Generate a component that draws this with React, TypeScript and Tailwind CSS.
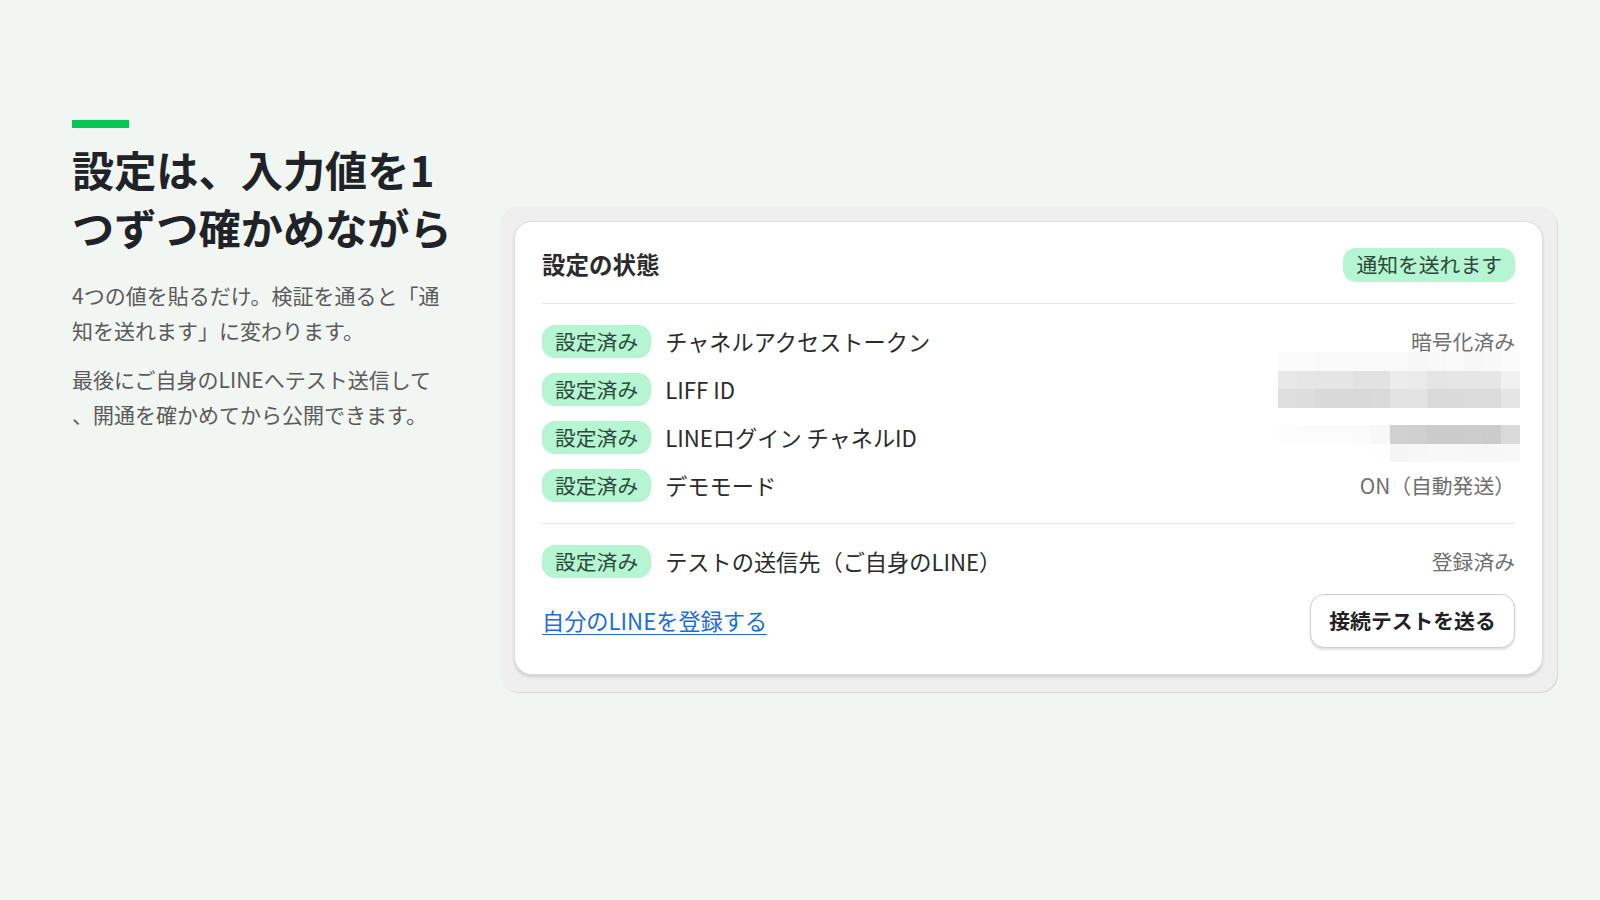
import React from "react";

const mosaicLiff: string[][] = [
  ["bg-[#fbfbfb]", "bg-[#fbfbfb]", "bg-[#fafafa]", "bg-[#fafafa]", "bg-[#fafafa]", "bg-[#fafafa]", "bg-[#fafafa]", "bg-[#f7f7f7]", "bg-[#f8f8f8]", "bg-[#fafafa]", "bg-[#f7f7f7]", "bg-[#f8f8f8]", "bg-[#fbfbfb]"],
  ["bg-[#e8e8e8]", "bg-[#e6e6e6]", "bg-[#e5e5e5]", "bg-[#e5e5e5]", "bg-[#e2e2e2]", "bg-[#e2e2e2]", "bg-[#ececec]", "bg-[#eaeaea]", "bg-[#e5e5e5]", "bg-[#e6e6e6]", "bg-[#e6e6e6]", "bg-[#e6e6e6]", "bg-[#f0f0f0]"],
  ["bg-[#dedede]", "bg-[#dddddd]", "bg-[#d9d9d9]", "bg-[#d9d9d9]", "bg-[#d9d9d9]", "bg-[#dadada]", "bg-[#e3e3e3]", "bg-[#e3e3e3]", "bg-[#dadada]", "bg-[#dadada]", "bg-[#dbdbdb]", "bg-[#dbdbdb]", "bg-[#e5e5e5]"],
];

const mosaicLogin: string[][] = [
  ["bg-[#fdfdfd]", "bg-[#fcfcfc]", "bg-[#fcfcfc]", "bg-[#fcfcfc]", "bg-[#fbfbfb]", "bg-[#f8f8f8]", "bg-[#d1d1d1]", "bg-[#cfcfcf]", "bg-[#cbcbcb]", "bg-[#cbcbcb]", "bg-[#cdcdcd]", "bg-[#cbcbcb]", "bg-[#dadada]"],
  ["bg-white", "bg-white", "bg-white", "bg-white", "bg-white", "bg-[#fefefe]", "bg-[#f5f5f5]", "bg-[#f7f7f7]", "bg-[#f8f8f8]", "bg-[#f8f8f8]", "bg-[#f7f7f7]", "bg-[#f7f7f7]", "bg-[#f8f8f8]"],
];

function Mosaic({ rows, top }: { rows: string[][]; top: string }) {
  return (
    <div className={`absolute right-[-5px] ${top} flex flex-col`}>
      {rows.map((r, i) => (
        <div key={i} className="flex">
          {r.map((c, j) => (
            <div key={j} className={`h-[18.5px] w-[18.6px] ${c}`} />
          ))}
        </div>
      ))}
    </div>
  );
}

function Badge({ children }: { children: React.ReactNode }) {
  return (
    <span className="flex h-[33px] shrink-0 items-center justify-center rounded-[13px] bg-[#b5f5d1] px-[13px] text-[20.8px] text-[#2c4a3a]">
      {children}
    </span>
  );
}

function Row({ label, right }: { label: string; right: React.ReactNode }) {
  return (
    <div className="flex h-[33px] items-center justify-between">
      <div className="flex items-center gap-[14px]">
        <Badge>設定済み</Badge>
        <span className="text-[22.2px] text-[#2b2b2b]">{label}</span>
      </div>
      {right}
    </div>
  );
}

export default function App() {
  return (
    <div className="flex min-h-screen w-full bg-[#f1f6f3] pl-[72px] font-['Noto_Sans_CJK_JP',sans-serif]">
      <div className="w-[390px] shrink-0 pt-[120px]">
        <div className="h-[8px] w-[57px] bg-[#06c755]" />
        <h1 className="mt-[12px] whitespace-nowrap text-[42.2px] font-bold leading-[58px] text-[#1f2328]">
          設定は、入力値を1
          <br />
          つずつ確かめながら
        </h1>
        <p className="mt-[22px] whitespace-nowrap text-[21px] leading-[34.5px] text-[#5a5a5a]">
          4つの値を貼るだけ。検証を通ると「通
          <br />
          知を送れます」に変わります。
        </p>
        <p className="mt-[15px] whitespace-nowrap text-[21px] leading-[34.5px] text-[#5a5a5a]">
          最後にご自身のLINEへテスト送信して
          <br />
          、開通を確かめてから公開できます。
        </p>
      </div>

      <div className="ml-[38px] mt-[207px] h-fit w-[1057px] shrink-0 rounded-[18px] bg-[#efefef] pb-[17px] pl-[14px] pr-[14px] pt-[14px] shadow-[1px_1px_0_#d9d9d9]">
        <div className="rounded-[18px] border border-[#dedede] bg-white px-[27px] pb-[26px] pt-[26px] shadow-[0_2px_3px_rgba(0,0,0,0.14)]">
          <div className="flex h-[34px] items-center justify-between">
            <span className="text-[23.5px] font-bold text-[#2b2b2b]">設定の状態</span>
            <span className="flex h-[34px] items-center rounded-[13px] bg-[#b5f5d1] px-[13px] text-[20.8px] text-[#2c4a3a]">
              通知を送れます
            </span>
          </div>
          <div className="mt-[21px] h-px bg-[#e8e8e8]" />
          <div className="mt-[21px] flex flex-col gap-[15px]">
            <Row
              label="チャネルアクセストークン"
              right={<span className="text-[20.8px] text-[#6f6f6f]">暗号化済み</span>}
            />
            <Row
              label="LIFF ID"
              right={
                <div className="relative h-[33px] w-[250px]">
                  <Mosaic rows={mosaicLiff} top="top-[-21px]" />
                </div>
              }
            />
            <Row
              label="LINEログイン チャネルID"
              right={
                <div className="relative h-[33px] w-[250px]">
                  <Mosaic rows={mosaicLogin} top="top-[4px]" />
                </div>
              }
            />
            <Row
              label="デモモード"
              right={<span className="text-[20.8px] text-[#6f6f6f]">ON（自動発送）</span>}
            />
          </div>
          <div className="mt-[21px] h-px bg-[#e8e8e8]" />
          <div className="mt-[21px]">
            <Row
              label="テストの送信先（ご自身のLINE）"
              right={<span className="text-[20.8px] text-[#6f6f6f]">登録済み</span>}
            />
          </div>
          <div className="mt-[16px] flex items-center justify-between">
            <a
              href="#"
              className="text-[22.2px] text-[#1a6ddb] underline decoration-1 underline-offset-[4px]"
            >
              自分のLINEを登録する
            </a>
            <button className="flex h-[54px] w-[205px] items-center justify-center rounded-[14px] border border-[#cfcfcf] bg-white text-[20.8px] font-bold text-[#222] shadow-[0_2px_2px_rgba(0,0,0,0.12)]">
              接続テストを送る
            </button>
          </div>
        </div>
      </div>
    </div>
  );
}
